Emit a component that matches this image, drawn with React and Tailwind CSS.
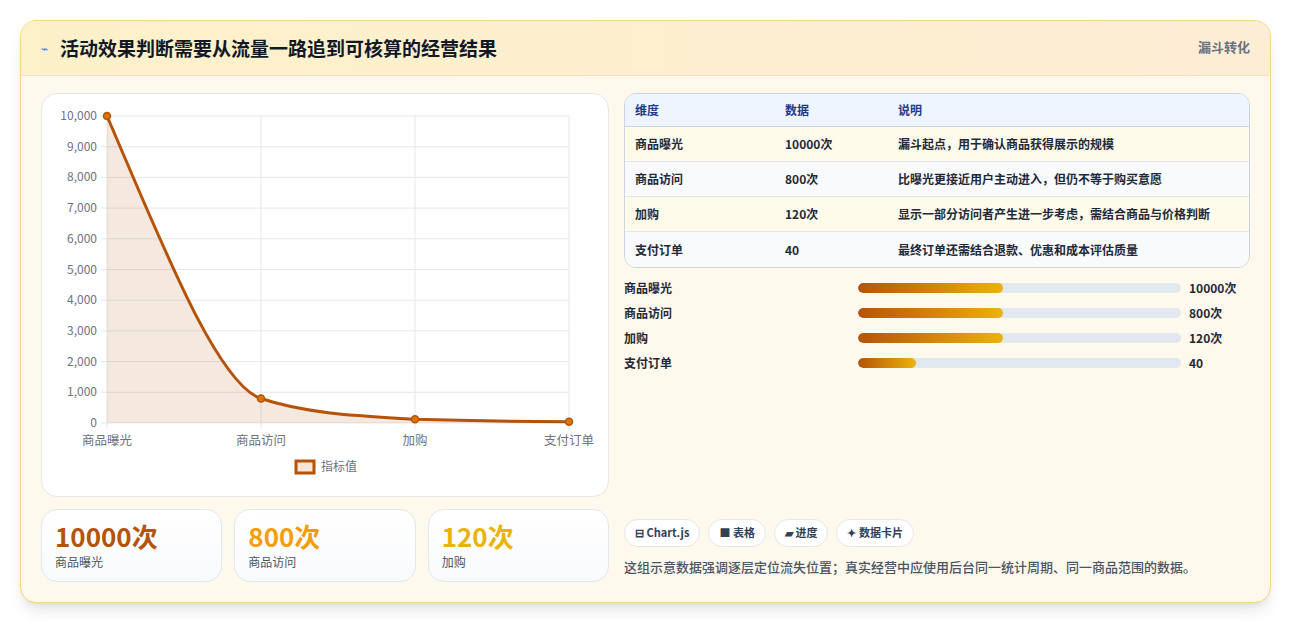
import React from 'react';

const rows = [
  ['商品曝光', '10000次', '漏斗起点，用于确认商品获得展示的规模'],
  ['商品访问', '800次', '比曝光更接近用户主动进入，但仍不等于购买意愿'],
  ['加购', '120次', '显示一部分访问者产生进一步考虑，需结合商品与价格判断'],
  ['支付订单', '40', '最终订单还需结合退款、优惠和成本评估质量'],
];

const bars = [
  ['商品曝光', '10000次', 45],
  ['商品访问', '800次', 45],
  ['加购', '120次', 45],
  ['支付订单', '40', 18],
];

const font = { fontFamily: '"Noto Sans CJK SC", "Noto Sans", sans-serif' };

function Chart() {
  const x0 = 65, x1 = 527, y0 = 22, y1 = 329;
  const ticks = [10000, 9000, 8000, 7000, 6000, 5000, 4000, 3000, 2000, 1000, 0];
  const xs = [65, 219, 373, 527];
  const labels = ['商品曝光', '商品访问', '加购', '支付订单'];
  const pts = [[65, 22], [219, 304.5], [373, 325.3], [527, 327.8]];
  const line = 'M65 22 C120 150, 175 290, 219 304.5 C265 320, 320 322, 373 325.3 C430 327, 480 327.5, 527 327.8';
  return (
    <svg width="568" height="403" className="block" style={font}>
      {ticks.map((t, i) => {
        const y = y0 + (i * (y1 - y0)) / 10;
        return (
          <g key={t}>
            <line x1={x0 - 6} x2={x1} y1={y} y2={y} stroke="#e5e7eb" />
            <text x={x0 - 10} y={y + 4} textAnchor="end" fontSize="12" fill="#6b7280">{t.toLocaleString('en-US')}</text>
          </g>
        );
      })}
      {xs.map((x, i) => (
        <g key={x}>
          <line x1={x} x2={x} y1={y0} y2={y1 + 6} stroke="#e5e7eb" />
          <text x={x} y={y1 + 22} textAnchor="middle" fontSize="12.5" fill="#6b7280">{labels[i]}</text>
        </g>
      ))}
      <path d={line + ` L527 ${y1} L65 ${y1} Z`} fill="rgba(180,83,9,0.13)" />
      <path d={line} fill="none" stroke="#b45309" strokeWidth="3" />
      {pts.map(([x, y]) => (
        <circle key={x} cx={x} cy={y} r="3.5" fill="#d97706" stroke="#b45309" strokeWidth="1.5" />
      ))}
      <rect x="254" y="367" width="18" height="12" fill="#f5e6d8" stroke="#b45309" strokeWidth="3" />
      <text x="279" y="377" fontSize="12" fill="#6b7280">指标值</text>
    </svg>
  );
}

export default function App() {
  return (
    <div className="bg-white min-h-screen pt-5 px-5" style={font}>
      <div className="rounded-2xl border border-[#f8d77a] bg-[#fff8ec] shadow-lg overflow-hidden">
        <div className="h-[55px] flex items-center justify-between px-5 bg-gradient-to-r from-[#fdf1c9] to-[#feedd5] border-b border-[#f3e3c0] relative">
          <div className="flex items-center gap-3">
            <span className="text-[#3b82f6] text-xs">⌁</span>
            <h1 className="text-[19px] font-bold text-[#111827]">活动效果判断需要从流量一路追到可核算的经营结果</h1>
          </div>
          <span className="absolute right-5 top-4 text-[13px] font-bold text-[#6b7280]">漏斗转化</span>
        </div>
        <div className="flex gap-[15px] p-5 pt-[17px]">
          <div className="w-[568px] flex flex-col gap-3">
            <div className="h-[404px] rounded-2xl border border-[#e5e7eb] bg-white overflow-hidden">
              <Chart />
            </div>
            <div className="grid grid-cols-3 gap-[12px]">
              {[['10000次', '商品曝光', 'text-[#b45309]'], ['800次', '商品访问', 'text-[#f59e0b]'], ['120次', '加购', 'text-[#eab308]']].map(([v, l, c]) => (
                <div key={l} className="h-[73px] rounded-2xl border border-[#e2e8f0] bg-gradient-to-b from-white to-[#f8fafc] px-[13px] pt-2">
                  <div className={`text-[26px] leading-[36px] font-bold ${c}`}>{v}</div>
                  <div className="text-xs text-[#4b5563]">{l}</div>
                </div>
              ))}
            </div>
          </div>
          <div className="flex-1 flex flex-col">
            <div className="rounded-xl border border-[#cbd5e1] overflow-hidden text-xs text-[#1f2937] font-semibold">
              <div className="flex h-[33px] items-center bg-[#eef5fe] text-[#1e3a8a] border-b border-[#cbd5e1]">
                <div className="w-[160px] pl-[10px]">维度</div>
                <div className="w-[113px]">数据</div>
                <div className="flex-1">说明</div>
              </div>
              {rows.map((r, i) => (
                <div key={r[0]} className={`flex h-[35px] items-center ${i % 2 ? 'bg-[#f8fafc]' : 'bg-[#fffbeb]'} ${i < 3 ? 'border-b border-[#e5e7eb]' : ''}`}>
                  <div className="w-[160px] pl-[10px]">{r[0]}</div>
                  <div className="w-[113px]">{r[1]}</div>
                  <div className="flex-1">{r[2]}</div>
                </div>
              ))}
            </div>
            <div className="mt-[7px] flex flex-col text-xs font-semibold text-[#1f2937]">
              {bars.map(([l, v, w]) => (
                <div key={l} className="flex items-center h-[25px]">
                  <div className="w-[234px]">{l}</div>
                  <div className="w-[323px] h-[10px] rounded-full bg-[#e2e8f0] overflow-hidden">
                    <div className="h-full rounded-full bg-gradient-to-r from-[#b45309] to-[#eab308]" style={{ width: `${w}%` }} />
                  </div>
                  <div className="ml-2">{v}</div>
                </div>
              ))}
            </div>
            <div className="mt-auto flex gap-2 text-[11px] font-semibold text-[#334155]">
              {['⊟ Chart.js', '■ 表格', '▰ 进度', '✦ 数据卡片'].map((c) => (
                <span key={c} className="h-[28px] px-[10px] flex items-center rounded-full bg-white border border-[#e5e7eb]">{c}</span>
              ))}
            </div>
            <p className="mt-[10px] mb-[6px] text-[13px] text-[#4b5563] font-medium">这组示意数据强调逐层定位流失位置；真实经营中应使用后台同一统计周期、同一商品范围的数据。</p>
          </div>
        </div>
      </div>
      <div className="h-[20px]" />
    </div>
  );
}
